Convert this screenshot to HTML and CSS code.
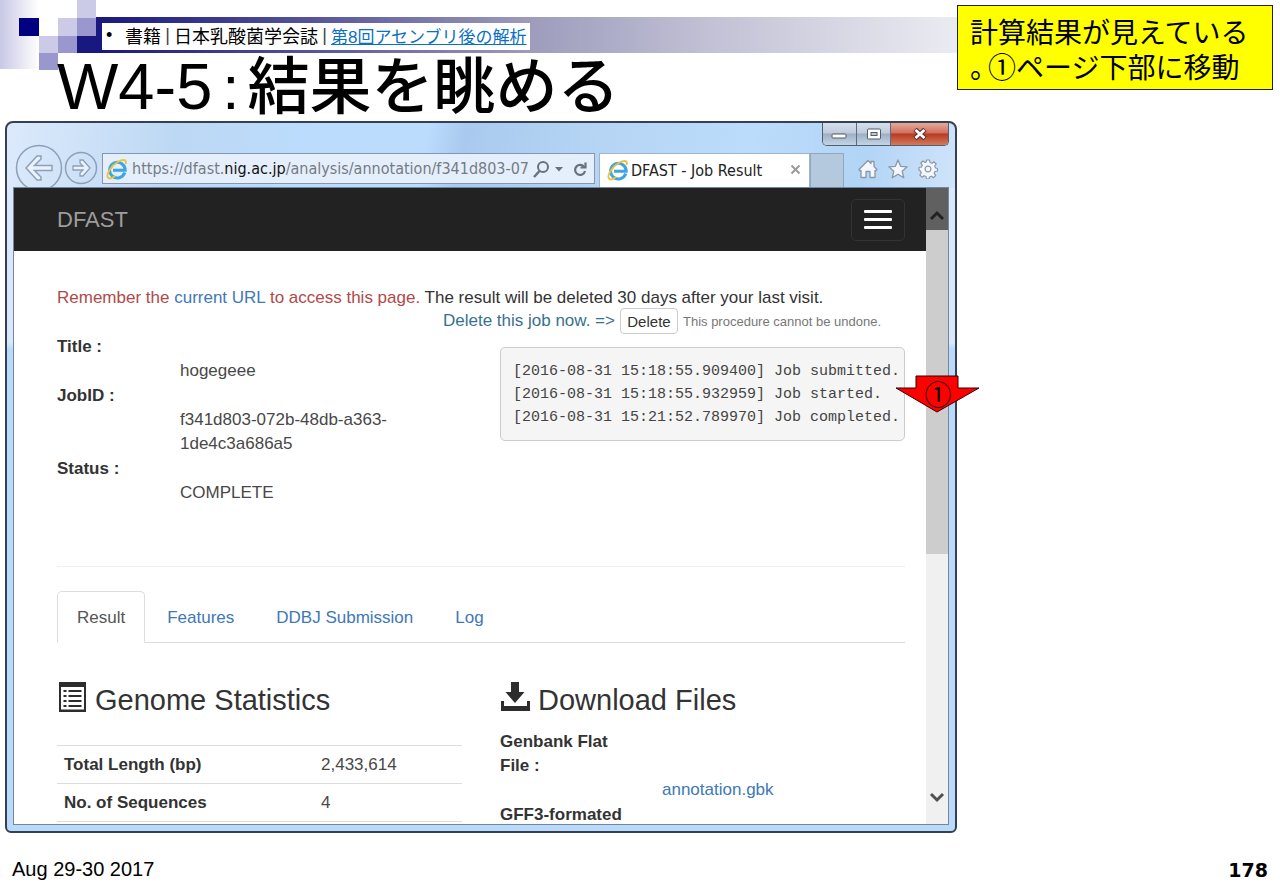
FILE: index.html
```html
<!DOCTYPE html>
<html lang="ja">
<head>
<meta charset="utf-8">
<title>W4-5：結果を眺める</title>
<link rel="stylesheet" href="styles.css">
</head>
<body>
<svg width="0" height="0" class="defs" aria-hidden="true">
  <symbol id="ie" viewBox="0 0 22 22">
    <path d="M18.800 14.600A7.800 7.800 0 1 1 19.200 12.300H7" fill="none" stroke="#3fa4e2" stroke-width="3"/>
    <path d="M2.200 19.800C-.6 17 5 7.800 12 3.800c5-2.800 8.600-2.400 7.800 1.600M2.200 19.800c1.600 1.400 4.600-.2 6.400-1.600" fill="none" stroke="#ecc43c" stroke-width="1.900" stroke-linecap="round"/>
  </symbol>
</svg>
<div class="slide">
  <header class="head">
    <div class="band"></div>
    <svg class="motif" width="103" height="71" viewBox="0 0 103 71" aria-hidden="true">
      <defs><linearGradient id="fade"><stop offset="0" stop-color="#c9c8e6"/><stop offset="1" stop-color="#fff"/></linearGradient></defs>
      <rect width="39" height="69" fill="url(#fade)"/>
      <rect x="77" y="36" width="26" height="17" fill="#181880"/>
      <rect x="19" y="18" width="20" height="18" fill="#000080"/>
      <rect x="77" width="19" height="18" fill="#cccbe7"/>
      <rect x="58" y="18" width="19" height="18" fill="#cccbe7"/>
      <rect x="77" y="18" width="19" height="18" fill="#9997ce"/>
      <rect x="39" y="36" width="19" height="17" fill="#cccbe7"/>
      <rect x="58" y="36" width="19" height="17" fill="#9997ce"/>
      <rect x="39" y="53" width="19" height="17" fill="#9997ce"/>
    </svg>
    <nav class="crumbs"><span class="dot">•</span><span>書籍</span><span class="sep">|</span><span>日本乳酸菌学会誌</span><span class="sep">|</span><a href="#">第8回アセンブリ後の解析</a></nav>
    <h1><span class="num">W4-5</span><span class="colon">:</span><span>結果を眺める</span></h1>
  </header>

  <aside class="callout">計算結果が見えている<br><span class="maru">。</span>①ページ下部に移動</aside>

  <main class="window">
    <div class="chrome">
      <div class="winbtns">
        <button aria-label="Minimize"><svg width="18" height="12"><rect x="1" y="6" width="14" height="4" rx="1" fill="#fff" stroke="#555c68"/></svg></button>
        <button aria-label="Maximize"><svg width="16" height="12"><rect x="1.500" y="1" width="13" height="10" rx="1" fill="#fff" stroke="#555c68"/><rect x="5" y="4.500" width="6" height="3" fill="#bcd" stroke="#555c68"/></svg></button>
        <button class="close" aria-label="Close"><svg width="16" height="12"><path d="M3 1.500l10 9M13 1.500l-10 9" stroke="#5c3434" stroke-width="5"/><path d="M3.500 2l9 8M12.500 2l-9 8" stroke="#fff" stroke-width="2.800"/></svg></button>
      </div>
      <div class="toolbar">
        <button class="back" aria-label="Back"><svg width="48" height="48" viewBox="0 0 48 48" fill="none" stroke="#8e9fb6"><circle cx="24" cy="24" r="22.500" stroke-width="1.500"/><path d="M11 24l11-12h4v3l-6.500 6.500H37v5H19.500L26 33v3h-4z" fill="#e9f2fd" stroke-width="1.500"/></svg></button>
        <button class="fwd" aria-label="Forward"><svg width="34" height="34" viewBox="0 0 34 34" fill="none" stroke="#8e9fb6"><circle cx="17" cy="17" r="15.500" stroke-width="1.500"/><path d="M26 17l-7-8h-3v3l3 3H9v4h10l-3 3v3h3z" fill="#e9f2fd" stroke-width="1.300"/></svg></button>
        <div class="address">
          <svg width="22" height="22"><use href="#ie"/></svg>
          <div class="url" role="textbox" aria-label="Address" contenteditable="true" spellcheck="false">https://dfast.<b>nig.ac.jp</b>/analysis/annotation/f341d803-07</div>
          <button aria-label="Search"><svg width="18" height="20" fill="none" stroke="#68717e" stroke-width="2"><circle cx="11" cy="8" r="5"/><path d="M7.500 12L2 18" stroke-width="2.500"/></svg></button>
          <button aria-label="Show list"><svg width="10" height="8"><path d="M1 2h8L5 6.500z" fill="#68717e"/></svg></button>
          <button aria-label="Refresh" class="refresh"><svg width="16" height="18" fill="none" stroke="#68717e" stroke-width="2.200"><path d="M12.500 7.500A5 5 0 1 0 13 11"/><path d="M8.500 7.500h5v-5" /></svg></button>
        </div>
        <div class="tab"><svg width="22" height="22"><use href="#ie"/></svg><span>DFAST - Job Result</span><button aria-label="Close tab"><svg width="12" height="12"><path d="M1.500 1.500l8 8M9.500 1.500l-8 8" stroke="#9a9a9a" stroke-width="2"/></svg></button></div>
        <button class="newtab" aria-label="New tab"></button>
        <div class="tools">
          <button aria-label="Home"><svg width="20" height="20" fill="#f4f8fd" stroke="#8b97a8" stroke-width="1.300" stroke-linejoin="round"><path d="M1 10.500L10 1.500l3 3V2.500h3v5l3 3-1.500 1.500L17 11.500V18.500h-5v-6H8v6H3v-7l-.800.500z"/></svg></button>
          <button aria-label="Favorites"><svg width="20" height="20" fill="#f4f8fd" stroke="#8b97a8" stroke-width="1.300" stroke-linejoin="round"><path d="M10 1l2.600 6.300 6.600.500-5 4.400 1.600 6.600L10 15.200l-5.800 3.600 1.600-6.600-5-4.400 6.600-.500z"/></svg></button>
          <button aria-label="Settings"><svg width="20" height="20" viewBox="-10 -10 20 20" fill="#f4f8fd" stroke="#8b97a8" stroke-width="1.200" stroke-linejoin="round"><path d="M-1.500-9h3l.5 2.500 2 .8 2-1.500 2.200 2.200-1.500 2 .8 2 2 .5v2.500l-2.500.5-.8 1.800 1.500 2.200-2.200 2.200-2-1.500-2 .8-.5 2h-2.500l-.5-2.500-2-.8-2 1.500-2.200-2.200 1.500-2-.8-2L-9 1.300v-2.800l2.500-.5.800-1.800L-7.200-6-5-8l2 1.500 1.200-.5z"/><circle r="2.900"/></svg></button>
        </div>
      </div>
    </div>

    <div class="view">
      <div class="doc">
        <nav class="navbar"><a class="brand" href="#">DFAST</a><button class="burger" aria-label="Menu"><i></i><i></i><i></i></button></nav>
        <div class="content">
          <p class="notice"><span class="danger">Remember the <a href="#">current URL</a> to access this page.</span> The result will be deleted 30 days after your last visit.</p>
          <p class="remove"><span class="info">Delete this job now. =&gt;</span><button>Delete</button><small>This procedure cannot be undone.</small></p>
          <div class="cols job">
            <dl><dt>Title :</dt><dd>hogegeee</dd><dt>JobID :</dt><dd>f341d803-072b-48db-a363-1de4c3a686a5</dd><dt>Status :</dt><dd>COMPLETE</dd></dl>
            <pre>[2016-08-31 15:18:55.909400] Job submitted.
[2016-08-31 15:18:55.932959] Job started.
[2016-08-31 15:21:52.789970] Job completed.</pre>
          </div>
          <hr>
          <ul class="tabs"><li><a class="active" href="#">Result</a></li><li><a href="#">Features</a></li><li><a href="#">DDBJ Submission</a></li><li><a href="#">Log</a></li></ul>
          <div class="cols">
            <section>
              <h2><svg width="30" height="30" fill="#2d2d2d"><path fill-rule="evenodd" d="M2 0h27v30H2zM4 5v22.500h23V5z"/><path d="M6.500 8h3v2h-3zM6.500 13h3v2h-3zM6.500 18h3v2h-3zM6.500 23h3v2h-3zM11.500 8h13v2h-13zM11.500 13h13v2h-13zM11.500 18h13v2h-13zM11.500 23h13v2h-13z"/></svg>Genome Statistics</h2>
              <table><tr><th scope="row">Total Length (bp)</th><td>2,433,614</td></tr><tr><th scope="row">No. of Sequences</th><td>4</td></tr></table>
            </section>
            <section>
              <h2><svg width="30" height="30" fill="#2d2d2d"><path d="M11 0h8v10h5.500L15 21 5.500 10H11zM1 19h3v5h23v-5h3v10H1z"/></svg>Download Files</h2>
              <dl class="files"><dt>Genbank Flat File :</dt><dd><a href="#">annotation.gbk</a></dd><dt>GFF3-formated</dt></dl>
            </section>
          </div>
        </div>
      </div>
      <div class="scroll" aria-hidden="true">
        <div class="up"><svg width="16" height="12"><path d="M2 10l6-6 6 6" fill="none" stroke="#222" stroke-width="3"/></svg></div>
        <div class="thumb"></div>
        <div class="down"><svg width="16" height="12"><path d="M2 2l6 6 6-6" fill="none" stroke="#505050" stroke-width="3"/></svg></div>
      </div>
    </div>

    <div class="arrow"><svg width="86" height="38" viewBox="0 0 86 38"><path d="M21 1h42v12h21L42 37 1 13h20z" fill="#f00" stroke="#300" stroke-width="1"/></svg><span>①</span></div>
  </main>

  <footer class="foot"><span>Aug 29-30 2017</span><b>178</b></footer>
</div>
</body>
</html>
```
FILE: styles.css
```css
* { box-sizing: border-box; }
body { margin: 0; background: #fff; color: #333; font-family: "Liberation Sans", "Noto Sans CJK JP", sans-serif; font-size: 17px; }
button { border: 0; padding: 0; margin: 0; background: none; font: inherit; color: inherit; display: flex; align-items: center; justify-content: center; }
svg { display: block; flex: none; }
h1, h2, p, dl, dd, ul, pre { margin: 0; padding: 0; }
a { color: #4078b8; text-decoration: none; }
.defs { position: absolute; }

.slide { display: grid; grid-template-columns: minmax(0, 1fr) 323px; grid-template-rows: 121px minmax(0, 1fr) 53px; height: 100vh; }

.head { position: relative; padding-top: 23px; color: #000; }
.band { position: absolute; top: 17px; left: 96px; right: 0; height: 36px; background: linear-gradient(90deg, #181880 0, #55549a 25%, #9c9bbb 50%, #c3c2d6 72%, #ebebf2 100%); }
.motif { position: absolute; top: 0; left: 0; }
.crumbs { position: relative; display: flex; align-items: center; width: max-content; height: 27px; margin-left: 102px; padding: 0 3px 3px 4px; background: #fff; font-size: 18px; white-space: nowrap; }
.crumbs .dot { width: 19px; }
.crumbs .sep { width: 13px; color: #444; text-align: center; }
.crumbs a { color: #0a70c4; font-size: 17px; text-decoration: underline; }
h1 { position: relative; display: flex; align-items: baseline; padding-left: 57px; font-size: 62px; font-weight: 400; line-height: 74px; white-space: nowrap; }
h1 .num { font-size: 65px; }
h1 .colon { padding: 0 8px 0 10px; }
h1 span:last-child { font-weight: 500; }

.callout { align-self: start; margin: 5px 7px 0 0; padding: 8px 0 5px 12px; border: 1px solid #222; background: #ff0; color: #000; font-family: "Noto Sans CJK JP", sans-serif; font-size: 28px; line-height: 35px; white-space: nowrap; }
.maru { display: inline-block; width: 18px; }

.window { grid-column: 1; position: relative; display: flex; flex-direction: column; margin-left: 5px; padding: 0 6px 6px; border: 2px solid #334152; border-radius: 8px 8px 6px 6px; background: linear-gradient(100deg, #dceafb 0, #bdd8f4 18%, #bbdcfd 32%, #bbdcfd 44%, #a9caee 48%, #b6d5f5 62%, #bcdcfb 78%, #b2d4f5 90%, #cfe4fb 100%) top / 100% 65px no-repeat, linear-gradient(#d9e8fb 31%, #b9dafb 32%); }
.chrome { flex: none; position: relative; height: 64px; padding-top: 21px; overflow: hidden; }
.winbtns { position: absolute; top: 0; right: 0; display: flex; height: 23px; border: 1px solid #50606f; border-top: 0; border-radius: 0 0 5px 5px; overflow: hidden; }
.winbtns button { width: 34px; background: linear-gradient(#d4e0ee 0, #c0ccdb 45%, #9eafc4 50%, #c3d4e6 100%); border-right: 1px solid #5c6b7d; }
.winbtns .close { width: 57px; border: 0; background: linear-gradient(#e5a99a 0, #d2705c 45%, #b83a20 50%, #d27a5e 100%); }
.toolbar { display: flex; align-items: flex-start; padding-left: 2px; }
.back { width: 48px; height: 48px; }
.fwd { width: 34px; height: 34px; margin: 7px 4px 0 1px; }
.address { flex: 1; min-width: 0; display: flex; align-items: center; gap: 4px; height: 31px; margin-top: 9px; padding: 0 6px 0 3px; border: 1px solid #8297b2; background: #e5effb; font: 16px "DejaVu Sans Condensed", "DejaVu Sans", sans-serif; color: #747b86; }
.url { flex: 1; min-width: 0; overflow: hidden; white-space: nowrap; outline: 0; }
.url b { font-weight: 400; color: #111; }
.refresh { margin-left: 4px; }
.tab { display: flex; align-items: center; gap: 2px; width: 211px; height: 35px; margin: 9px 0 0 4px; padding: 0 7px 2px; background: #fff; border: 1px solid #9fb4cc; border-bottom: 0; color: #222; font: 16px "DejaVu Sans Condensed", "DejaVu Sans", sans-serif; white-space: nowrap; }
.tab button { margin-left: auto; }
.newtab { width: 34px; height: 35px; margin-top: 9px; background: #b5c9de; border: 1px solid #8ea7c2; }
.tools { display: flex; gap: 10px; margin: 15px 11px 0 14px; }

.view { flex: 1; min-height: 0; display: flex; overflow: hidden; border: 1px solid #71869f; background: #fff; }
.doc { flex: 1; min-width: 0; overflow: hidden; }
.navbar { display: flex; align-items: center; justify-content: space-between; height: 63px; padding: 0 21px 0 43px; background: #222; }
.brand { color: #9d9d9d; font-size: 22px; }
.burger { flex-direction: column; gap: 5px; width: 54px; height: 42px; border: 1px solid #333; border-radius: 5px; }
.burger i { width: 28px; height: 3px; border-radius: 1px; background: #fff; }
.content { padding: 35px 21px 0 43px; }
.notice { line-height: 24px; white-space: nowrap; }
.danger { color: #b04a4a; }
.info { color: #38718f; }
.remove { display: flex; align-items: center; justify-content: flex-end; gap: 5px; height: 22px; padding-right: 24px; white-space: nowrap; }
.remove button { flex: none; width: 58px; height: 26px; border: 1px solid #ccc; border-radius: 4px; background: #fff; font-size: 15px; }
small { color: #777; font-size: 13px; }
.cols { display: grid; grid-template-columns: minmax(0, 1fr) minmax(0, 1fr); column-gap: 38px; align-items: start; }
.job { padding-top: 3px; }
dl { line-height: 24px; }
dt { width: 123px; font-weight: 700; }
dd { margin: 0 0 1px 123px; color: #484848; }
pre { margin-top: 12px; padding: 12px 12px 11px; border: 1px solid #ccc; border-radius: 5px; background: #f5f5f5; color: #444; font: 15px/23px "Liberation Mono", monospace; }
.job dl { padding-bottom: 60px; }
hr { height: 1px; margin: 0; border: 0; background: #eee; }
.tabs { display: flex; gap: 2px; margin-top: 24px; border-bottom: 1px solid #ddd; list-style: none; }
.tabs a { display: block; margin-bottom: -1px; padding: 14px 19px 12px; border: 1px solid transparent; line-height: 24px; }
.tabs .active { border-color: #ddd #ddd #fff; border-radius: 5px 5px 0 0; background: #fff; color: #555; }
h2 { display: flex; align-items: center; gap: 8px; margin-top: 39px; font-size: 29px; font-weight: 400; line-height: 36px; white-space: nowrap; }
h2 svg { margin-bottom: 6px; }
table { width: 100%; margin-top: 27px; border-collapse: collapse; border-bottom: 1px solid #ddd; line-height: 24px; table-layout: fixed; }
th, td { padding: 7px 7px 6px; border-top: 1px solid #ddd; text-align: left; vertical-align: top; }
th { width: 257px; }
td { color: #484848; }
.files { margin-top: 12px; }
.files dd { margin-left: 162px; }

.scroll { display: flex; flex-direction: column; width: 22px; background: #f0f0f0; }
.up { display: flex; align-items: center; justify-content: center; height: 42px; padding-top: 12px; background: #606060; }
.thumb { height: 51%; background: #cdcdcd; }
.down { display: flex; justify-content: center; margin-top: auto; padding-bottom: 20px; }

.arrow { position: absolute; top: 252px; right: -26px; display: grid; place-items: center; color: #000; }
.arrow svg, .arrow span { grid-area: 1 / 1; }
.arrow span { font: 27px/34px "Noto Sans CJK JP", sans-serif; }

.foot { grid-column: 1 / -1; display: flex; align-items: center; justify-content: space-between; padding: 20px 12px 0; color: #000; font-size: 20px; }
.foot b { font: 700 19px "DejaVu Sans", sans-serif; }
```
